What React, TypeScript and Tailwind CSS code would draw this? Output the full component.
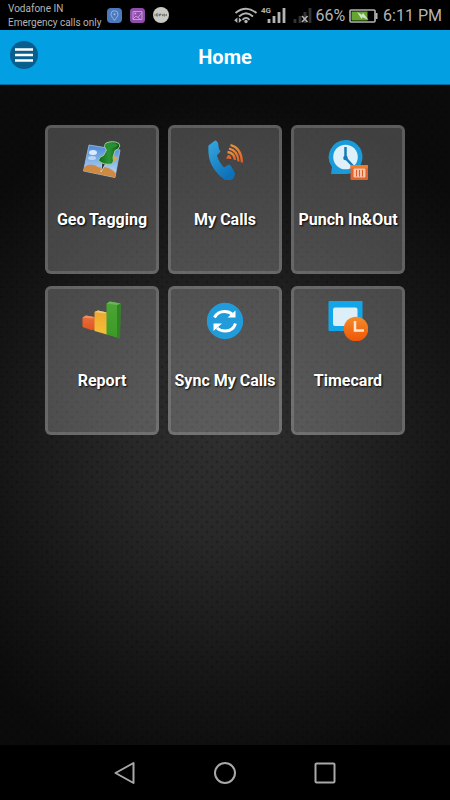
import React from 'react';

function StatusBar() {
  return (
    <div className="flex h-[30px] shrink-0 items-center justify-between bg-black px-2 text-[#b4b4b4]">
      <div className="flex items-center">
        <div className="pt-px text-[10px] leading-[14px] whitespace-nowrap">
          <div>Vodafone IN</div>
          <div>Emergency calls only</div>
        </div>
        <div className="ml-[5px] flex items-center gap-2">
          <svg className="h-[15px] w-[15px]" viewBox="0 0 15 15" aria-hidden="true">
            <rect width="15" height="15" rx="4" fill="#4a7abd" />
            <path d="M7.5 12.5 C6 10 4 8.4 4 6.2 a3.5 3.5 0 0 1 7 0 C11 8.4 9 10 7.5 12.5Z" fill="none" stroke="#9fbbe2" strokeWidth="0.9" />
            <circle cx="7.5" cy="6.2" r="1" fill="#9fbbe2" />
          </svg>
          <svg className="h-[15px] w-[15px]" viewBox="0 0 15 15" aria-hidden="true">
            <rect width="15" height="15" rx="3.5" fill="#8f4eac" />
            <path d="M3 3.5h9v8H3z M3 11 L6 8 L8 9.5 L12 4.5 M8 9.5 L11 12" fill="none" stroke="#c9a3da" strokeWidth="0.9" />
            <circle cx="5.3" cy="5.6" r="1" fill="#c9a3da" />
          </svg>
          <svg className="h-4 w-4" viewBox="0 0 16 16" aria-hidden="true">
            <circle cx="8" cy="8" r="8" fill="#c8c8c4" />
            <path d="M2 6.8v2.4 M3.5 6.8h1.5v2.2h-1.5z M6.5 9.2v-2.2h1.5v1h-1.5 M9.5 7v2.2 M10.8 7.2h1.2v1.8h-1.2z M13.5 7v2" fill="none" stroke="#65655f" strokeWidth="0.8" />
          </svg>
        </div>
      </div>

      <div className="flex items-center pt-px whitespace-nowrap">
        <svg className="h-[18px] w-[79px]" viewBox="0 0 79 18" fill="none" aria-hidden="true">
          {/* wifi */}
          <g stroke="#b4b4b4" strokeWidth="1.9">
            <path d="M2.5 6 Q13 -2.5 23.5 6" />
            <path d="M6 9.5 Q13 3 20 9.5" />
            <path d="M9.5 12.8 Q13 9 16.5 12.8" />
          </g>
          <circle cx="13" cy="14.5" r="1.7" fill="#b4b4b4" />
          <path d="M4.4 10.500v5.400L1.2 13.200z M5.800 10.500v5.400L8.800 13.200z" fill="#b4b4b4" />
          {/* signal of the first sim */}
          <path d="M36 12v4 M41 9v7 M46 5v11 M51 1v15" stroke="#b4b4b4" strokeWidth="2.8" />
          <text x="28" y="6" fontSize="8" fontWeight="700" fill="#b4b4b4">4G</text>
          {/* no service on the second sim */}
          <path d="M62 12v4 M67 9v7 M72 5v11 M77 1v15" stroke="#343434" strokeWidth="2.8" />
          <path d="M69 9l5.5 6 M74.5 9l-5.5 6" stroke="#b4b4b4" strokeWidth="1.6" />
        </svg>
        <span className="ml-[3px] text-base leading-5">66%</span>
        <svg className="mr-[5px] ml-1 h-[14px] w-[29px]" viewBox="0 0 29 14" aria-hidden="true">
          <rect x="1" y="1" width="25" height="12" rx="1" fill="none" stroke="#b4b4b4" strokeWidth="1.6" />
          <rect x="2.5" y="2.5" width="16" height="9" fill="#63a530" />
          <rect x="26.5" y="4" width="2" height="6" fill="#b4b4b4" />
          <path d="M8 3 L13 5.7 L14 3.7 L19.5 11 L13.5 8.3 L12.5 10z" fill="#d3dfca" />
        </svg>
        <span className="text-base leading-5">6:11 PM</span>
      </div>
    </div>
  );
}

function GeoIcon() {
  return (
    <svg className="h-10 w-10" viewBox="0 0 40 40" aria-hidden="true">
      <defs>
        <linearGradient id="sky" x1="0" y1="0" x2="0" y2="1">
          <stop offset="0" stopColor="#4a88d8" />
          <stop offset="1" stopColor="#c3e0fa" />
        </linearGradient>
        <linearGradient id="pin" x1="0" y1="0" x2="1" y2="0">
          <stop offset="0" stopColor="#0d6d17" />
          <stop offset="0.5" stopColor="#2f9436" />
          <stop offset="1" stopColor="#0a5612" />
        </linearGradient>
      </defs>
      <path d="M7 5 L38 10 L33 37.5 L1.5 31z" fill="url(#sky)" stroke="#9fbfe4" strokeWidth="0.8" />
      <path d="M2.5 27 Q9 22 17 27.5 Q27 25 33.8 33.5 L33 37.5 L1.5 31z" fill="#cf8a42" />
      <ellipse cx="11" cy="12.5" rx="4" ry="2.5" fill="#dcebfb" />
      <ellipse cx="10" cy="18" rx="4" ry="2" fill="#b9d4f3" />
      <path d="M30 15 L36 18 L32 22z" fill="#d9aa4c" />
      <path d="M20 21 L19 32 L24 23z" fill="#333" stroke="#d5dbe0" strokeWidth="0.8" />
      <path d="M24 3 Q31 0 37 3.5 Q39 6 36 9 L33 10.5 L31 17.5 Q32.5 21 30 24 Q22 25.5 16.5 20.5 Q17 16.5 21.5 15.5 L24.5 10 Q21 6 24 3z" fill="url(#pin)" stroke="#a8d0a7" strokeWidth="0.9" />
      <path d="M25 3.8 Q31 1.5 36 5.3 Q33 9 26 7.5z" fill="#269133" />
    </svg>
  );
}

function CallsIcon() {
  return (
    <svg className="h-10 w-10" viewBox="0 0 40 40" aria-hidden="true">
      <defs>
        <linearGradient id="phone" x1="0" y1="0" x2="0.6" y2="1">
          <stop offset="0" stopColor="#36a9e0" />
          <stop offset="1" stopColor="#0d70b8" />
        </linearGradient>
        <linearGradient id="waves" x1="0" y1="0" x2="0" y2="1">
          <stop offset="0" stopColor="#ee8f3a" />
          <stop offset="1" stopColor="#dd5a24" />
        </linearGradient>
      </defs>
      <path d="M3.5 5.5 L10 0.5 Q12 0 13 3 L14 9 L15.5 11.5 L12 15.5 Q14 22.5 19 27.5 L24 24.5 Q25 24.5 26 26 L30 33 Q30 36 28 39 Q24 41 20 40 Q14 36 10 30.5 Q5 23.5 4 17 Q3 11 3.5 5.5z" fill="url(#phone)" />
      <path d="M21 18.5 L23 15 Q26 15 26.5 19z" fill="#e8642a" />
      <g fill="none" stroke="url(#waves)" strokeWidth="2.3">
        <path d="M22.5 12 Q29.5 13 30 20" />
        <path d="M24 8.5 Q33 10.5 33.5 21.5" />
        <path d="M25.5 5 Q36.5 8 37 22.5" />
      </g>
    </svg>
  );
}

function PunchIcon() {
  return (
    <svg className="h-10 w-10" viewBox="0 0 40 40" aria-hidden="true">
      <path d="M17.5 0 A17 17 0 1 1 17.5 34 L3 34 L4 27 A17 17 0 0 1 17.5 0z" fill="#1a9bd9" />
      <circle cx="17.5" cy="17" r="12.3" fill="#def1fb" />
      <path d="M17.5 7 V18 L25 26" fill="none" stroke="#167bb8" strokeWidth="2.5" />
      <circle cx="17.5" cy="18" r="2.3" fill="#167bb8" />
      <rect x="22.5" y="25" width="17.5" height="15" rx="1" fill="#e0622c" />
      <rect x="22.5" y="25" width="17.5" height="3.5" rx="1" fill="#f07c28" />
      <rect x="25.5" y="28.5" width="12" height="9" rx="1" fill="#f4c3a9" />
      <path d="M28.5 30v6.5 M31.5 30v6.5 M34.5 30v6.5" stroke="#df5a29" strokeWidth="1" />
    </svg>
  );
}

function ReportIcon() {
  return (
    <svg className="h-10 w-10" viewBox="0 0 40 40" aria-hidden="true">
      <defs>
        <linearGradient id="bar1" x1="0" y1="0" x2="0" y2="1">
          <stop offset="0" stopColor="#e9703c" />
          <stop offset="1" stopColor="#e05522" />
        </linearGradient>
        <linearGradient id="bar2" x1="0" y1="0" x2="0" y2="1">
          <stop offset="0" stopColor="#eda62f" />
          <stop offset="1" stopColor="#f4bf3a" />
        </linearGradient>
        <linearGradient id="bar3" x1="0" y1="0" x2="0" y2="1">
          <stop offset="0" stopColor="#4da436" />
          <stop offset="1" stopColor="#3a9a26" />
        </linearGradient>
      </defs>
      <path d="M0.5 16.5 L4 14.5 L13 16.5 V29 L9 29 L0.5 26z" fill="url(#bar1)" />
      <path d="M0.5 16.5 L4 14.5 L13 16 L10 17.5z" fill="#ee8c62" />
      <path d="M12.5 11 L16 9.5 L25 11.5 V33.5 L12.5 30z" fill="url(#bar2)" />
      <path d="M12.5 11 L16 9.5 L25 11.5 L22 12.5z" fill="#f5ca72" />
      <path d="M24.5 2.5 L28 0.5 L38.5 2.5 L38 37.5 L24.5 33.5z" fill="url(#bar3)" />
      <path d="M35 4 L38.5 2.5 L38 37.5 L35 36.5z" fill="#2d8420" />
      <path d="M24.5 2.5 L28 0.5 L38.5 2.5 L35 4z" fill="#6bb558" />
    </svg>
  );
}

function SyncIcon() {
  return (
    <svg className="h-10 w-10" viewBox="0 0 40 40" aria-hidden="true">
      <circle cx="20" cy="20" r="18.2" fill="#219bda" />
      <g fill="none" stroke="#fff" strokeWidth="3">
        <path d="M9.5 16.5 Q12.5 10.5 19.5 10.5 Q24.5 10.5 27.5 13.5" />
        <path d="M30.5 22.5 Q28 30 20.5 30 Q15 30 12 27" />
      </g>
      <path d="M30.5 9.5 V16.5 L22.5 16.5z M8.5 30 V22.5 L17 22.5z" fill="#fff" />
    </svg>
  );
}

function TimecardIcon() {
  return (
    <svg className="h-10 w-10" viewBox="0 0 40 40" aria-hidden="true">
      <defs>
        <linearGradient id="clock" x1="0" y1="0" x2="0" y2="1">
          <stop offset="0" stopColor="#f58c2b" />
          <stop offset="1" stopColor="#ee5505" />
        </linearGradient>
      </defs>
      <rect x="0.5" y="0" width="34" height="30" rx="1" fill="#12a5e7" />
      <rect x="5" y="6.5" width="24.5" height="18.5" rx="2" fill="#dceff8" />
      <circle cx="28" cy="28" r="12.3" fill="url(#clock)" />
      <path d="M27 20 V29.5 H36" fill="none" stroke="#fce5d0" strokeWidth="2.5" />
    </svg>
  );
}

const tiles = [
  { label: 'Geo Tagging', icon: <GeoIcon /> },
  { label: 'My Calls', icon: <CallsIcon /> },
  { label: 'Punch In&Out', icon: <PunchIcon /> },
  { label: 'Report', icon: <ReportIcon /> },
  { label: 'Sync My Calls', icon: <SyncIcon /> },
  { label: 'Timecard', icon: <TimecardIcon /> },
];

export default function App() {
  return (
    <div className="flex min-h-screen flex-col bg-black font-['Roboto',sans-serif]">
      <StatusBar />

      <header className="grid h-[55px] shrink-0 grid-cols-[1fr_auto_1fr] items-center border-b border-[#086a98] bg-[#029fe3] px-[10px]">
        <button type="button" aria-label="Open menu" className="mb-1 flex h-7 w-7 items-center justify-center rounded-full bg-[#075f8e]">
          <svg className="h-[14px] w-[18px]" viewBox="0 0 18 14" aria-hidden="true">
            <path d="M0 1.5h18 M0 7h18 M0 12.5h18" stroke="#fff" strokeWidth="2.6" />
          </svg>
        </button>
        <h1 className="text-xl font-bold text-white">Home</h1>
      </header>

      {/* dotted metal backdrop, lighter in the middle */}
      <main className="flex-1 bg-[radial-gradient(circle_at_2px_2px,rgba(0,0,0,0.3)_0px,transparent_2px),radial-gradient(circle_at_7px_7px,rgba(0,0,0,0.3)_0px,transparent_2px),radial-gradient(ellipse_72%_52%_at_50%_54%,#2f2f2f_0%,#282828_28%,#151515_72%,#0b0b0b_100%)] bg-[size:10px_10px,10px_10px,100%_100%] px-[45px] pt-10">
        <div className="grid grid-cols-3 gap-x-[9px] gap-y-3">
          {tiles.map((tile) => (
            <button
              key={tile.label}
              type="button"
              className="flex h-[149px] flex-col items-center rounded-md border-[3px] border-white/15 bg-white/22 pt-3"
            >
              {tile.icon}
              <span className="mt-7 text-base leading-6 font-bold whitespace-nowrap text-white [text-shadow:1px_1px_2px_#000]">
                {tile.label}
              </span>
            </button>
          ))}
        </div>
      </main>

      <nav className="flex h-[55px] shrink-0 items-center justify-center gap-[72px] bg-black">
        <button type="button" aria-label="Back">
          <svg className="h-7 w-7" viewBox="0 0 28 28" fill="none" aria-hidden="true">
            <path d="M22.5 4 V24 L4.5 14z" stroke="#a8a8a8" strokeWidth="2" strokeLinejoin="round" />
          </svg>
        </button>
        <button type="button" aria-label="Home screen">
          <svg className="h-7 w-7" viewBox="0 0 28 28" fill="none" aria-hidden="true">
            <circle cx="14" cy="14" r="10" stroke="#a8a8a8" strokeWidth="2" />
          </svg>
        </button>
        <button type="button" aria-label="Recent apps">
          <svg className="h-7 w-7" viewBox="0 0 28 28" fill="none" aria-hidden="true">
            <rect x="4.5" y="4.5" width="19" height="19" rx="1" stroke="#a8a8a8" strokeWidth="2" />
          </svg>
        </button>
      </nav>
    </div>
  );
}
